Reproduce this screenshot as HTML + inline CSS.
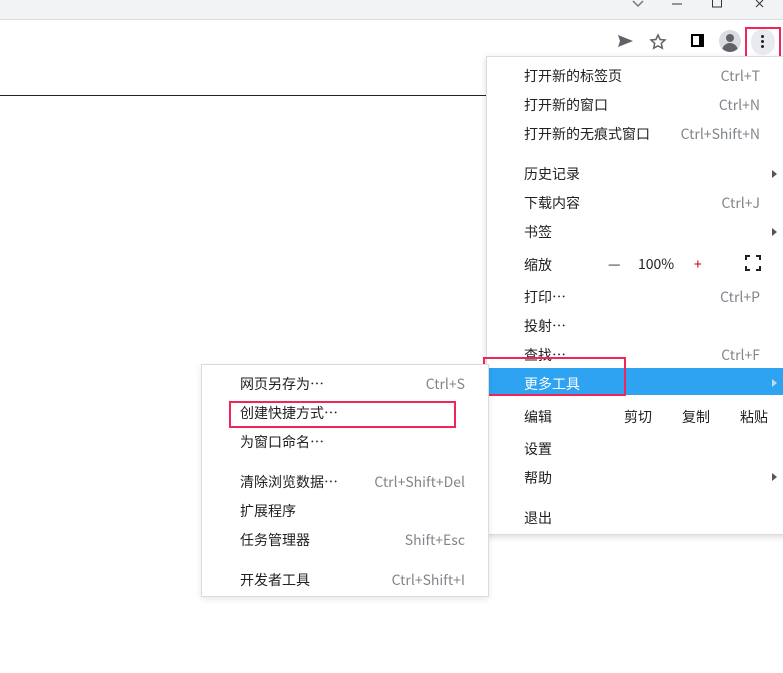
<!DOCTYPE html><html><head><meta charset="utf-8"><style>
body{margin:0;width:783px;height:673px;position:relative;background:#fff;font-family:"Noto Sans CJK SC","Liberation Sans",sans-serif;overflow:hidden}
.a{position:absolute}
.t{position:absolute;font-size:14px;line-height:18px;color:#202124;white-space:nowrap}
.s{position:absolute;font-size:14px;line-height:18px;color:#80868b;white-space:nowrap}
.red{position:absolute;border:2px solid #f0265a;box-sizing:border-box}
.arr{position:absolute;width:0;height:0;border-left:5px solid #555;border-top:4px solid transparent;border-bottom:4px solid transparent}
</style></head><body>
<div class="a" style="left:0;top:0;width:783px;height:19px;background:#f1f3f4;border-bottom:1px solid #dadce0"></div>
<svg class="a" style="left:630px;top:0" width="150" height="12"><path d="M3 1l5 5 5-5" stroke="#777" fill="none" stroke-width="1.5"/><path d="M42 4h10" stroke="#333"/><rect x="82.5" y="-1" width="9" height="8" stroke="#333" fill="none"/><path d="M126 0l7 7M133 0l-7 7" stroke="#333"/></svg>
<svg class="a" style="left:617px;top:33px" width="18" height="16"><path d="M1 2l15 6-15 6 2-6z" fill="#5f6368"/></svg>
<div class="a" style="left:649px;top:32px"><svg width="18" height="18"><path d="M9 2l2.1 4.5 4.9.5-3.7 3.3 1 4.9L9 12.8 4.7 15.2l1-4.9L2 7l4.9-.5z" fill="none" stroke="#5f6368" stroke-width="1.5"/></svg></div>
<div class="a" style="left:691px;top:34px;width:13px;height:13px;background:#000"><div class="a" style="left:2px;top:2px;width:6px;height:9px;background:#fff"></div></div>
<div class="a" style="left:719px;top:30px;width:22px;height:22px;border-radius:50%;background:#dadce0;overflow:hidden"><div class="a" style="left:7px;top:4px;width:8px;height:8px;border-radius:50%;background:#5f6368"></div><div class="a" style="left:3px;top:13px;width:16px;height:10px;border-radius:8px 8px 0 0;background:#5f6368"></div></div>
<div class="a" style="left:751px;top:29px;width:24px;height:26px;border-radius:12px;background:#e8eaed"></div>
<div class="a" style="left:761px;top:35px;width:3px;height:3px;background:#202124;border-radius:50%;box-shadow:0 5px #202124,0 10px #202124"></div>
<div class="red" style="left:745px;top:27px;width:36px;height:36px"></div>
<div class="a" style="left:0;top:95px;width:486px;height:1px;background:#222"></div>
<div class="a" style="left:486px;top:56px;width:300px;height:477px;background:#fff;border:1px solid #dadce0;box-shadow:0 2px 6px rgba(0,0,0,.15)"></div>
<div class="t" style="left:524px;top:67px">打开新的标签页</div><div class="s" style="right:23px;top:67px">Ctrl+T</div>
<div class="t" style="left:524px;top:96px">打开新的窗口</div><div class="s" style="right:23px;top:96px">Ctrl+N</div>
<div class="t" style="left:524px;top:125px">打开新的无痕式窗口</div><div class="s" style="right:23px;top:125px">Ctrl+Shift+N</div>
<div class="t" style="left:524px;top:165px">历史记录</div><div class="arr" style="left:772px;top:170px"></div>
<div class="t" style="left:524px;top:194px">下载内容</div><div class="s" style="right:23px;top:194px">Ctrl+J</div>
<div class="t" style="left:524px;top:223px">书签</div><div class="arr" style="left:772px;top:228px"></div>
<div class="t" style="left:524px;top:256px">缩放</div><div class="t" style="left:608px;top:255px">—</div><div class="t" style="left:638px;top:255px">100%</div><div class="t" style="left:694px;top:255px;color:#c00">+</div>
<svg class="a" style="left:745px;top:255px" width="16" height="16"><path d="M1 5V1h4M11 1h4v4M15 11v4h-4M5 15H1v-4" stroke="#202124" stroke-width="2" fill="none"/></svg>
<div class="t" style="left:524px;top:288px">打印…</div><div class="s" style="right:23px;top:288px">Ctrl+P</div>
<div class="t" style="left:524px;top:317px">投射…</div>
<div class="t" style="left:524px;top:346px">查找…</div><div class="s" style="right:23px;top:346px">Ctrl+F</div>
<div class="a" style="left:489px;top:368px;width:294px;height:27px;background:#2ea3f2"></div>
<div class="t" style="left:524px;top:375px;color:#fff">更多工具</div><div class="arr" style="left:772px;top:379px;border-left-color:#bde"></div>
<div class="t" style="left:524px;top:408px">编辑</div><div class="t" style="left:624px;top:408px">剪切</div><div class="t" style="left:682px;top:408px">复制</div><div class="t" style="left:740px;top:408px">粘贴</div>
<div class="t" style="left:524px;top:440px">设置</div>
<div class="t" style="left:524px;top:469px">帮助</div><div class="arr" style="left:772px;top:473px"></div>
<div class="t" style="left:524px;top:509px">退出</div>
<div class="red" style="left:483px;top:357px;width:143px;height:39px"></div>
<div class="a" style="left:201px;top:364px;width:286px;height:231px;background:#fff;border:1px solid #dadce0;box-shadow:0 2px 6px rgba(0,0,0,.1)"></div>
<div class="t" style="left:240px;top:375px">网页另存为…</div><div class="s" style="right:318px;top:375px">Ctrl+S</div>
<div class="t" style="left:240px;top:404px">创建快捷方式…</div>
<div class="t" style="left:240px;top:433px">为窗口命名…</div>
<div class="t" style="left:240px;top:473px">清除浏览数据…</div><div class="s" style="right:318px;top:473px">Ctrl+Shift+Del</div>
<div class="t" style="left:240px;top:502px">扩展程序</div>
<div class="t" style="left:240px;top:531px">任务管理器</div><div class="s" style="right:318px;top:531px">Shift+Esc</div>
<div class="t" style="left:240px;top:571px">开发者工具</div><div class="s" style="right:318px;top:571px">Ctrl+Shift+I</div>
<div class="red" style="left:229px;top:401px;width:227px;height:27px"></div>
</body></html>
